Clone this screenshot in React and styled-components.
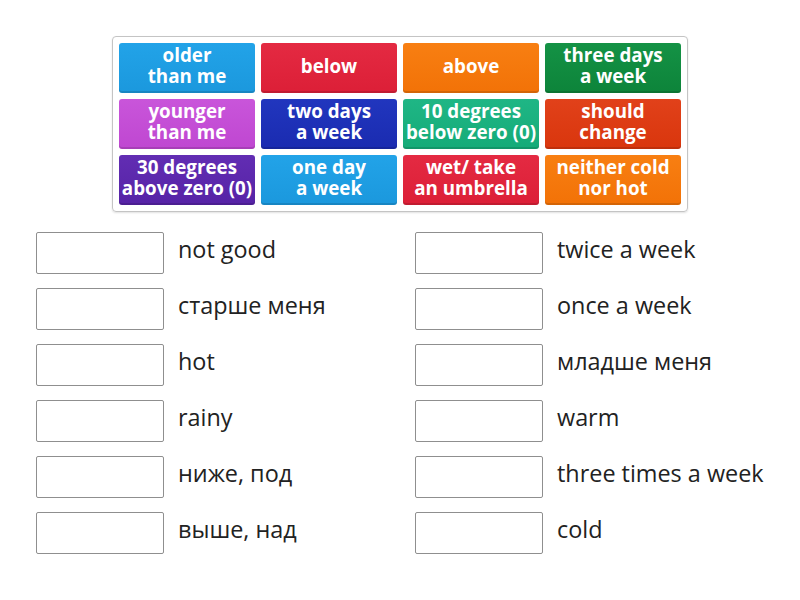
import React from 'react';
import styled, { createGlobalStyle } from 'styled-components';

const GlobalStyle = createGlobalStyle`
  body {
    margin: 0;
    background: #fff;
    font-family: "Open Sans", "Noto Sans", sans-serif;
  }
`;

const Page = styled.div`
  width: 800px;
  height: 600px;
  padding-top: 36px;
  box-sizing: border-box;
`;

const Panel = styled.div`
  width: 576px;
  box-sizing: border-box;
  margin: 0 auto;
  padding: 6px;
  border: 1px solid #c4c4c4;
  border-radius: 4px;
  box-shadow: 0 1px 2px rgba(0, 0, 0, 0.12);
  display: grid;
  grid-template-columns: repeat(4, 136px);
  grid-auto-rows: 50px;
  gap: 6px;
`;

const Tile = styled.div`
  border-radius: 3px;
  background: linear-gradient(to bottom, ${p => p.$light}, ${p => p.$color});
  box-shadow: inset 0 -2px 0 rgba(0, 0, 0, 0.12);
  color: #fff;
  font-weight: 700;
  font-size: 18.8px;
  line-height: 21px;
  text-align: center;
  display: flex;
  align-items: center;
  justify-content: center;
  padding-bottom: 4px;
  box-sizing: border-box;
  white-space: nowrap;
`;

const Answers = styled.div`
  margin: 20px 0 0 36px;
  display: grid;
  grid-template-columns: 379px 379px;
  row-gap: 14px;
`;

const Row = styled.div`
  display: flex;
  align-items: center;
  gap: 14px;
  height: 42px;
`;

const Slot = styled.div`
  width: 128px;
  height: 42px;
  box-sizing: border-box;
  border: 1px solid #8f8f8f;
  border-radius: 2px;
  background: #fff;
  flex-shrink: 0;
`;

const Label = styled.span`
  font-size: 23.4px;
  color: #222;
  margin-top: -8px;
  white-space: nowrap;
`;

const tiles = [
  { text: ['older', 'than me'], color: '#1b98dd', light: '#22a3e8' },
  { text: ['below'], color: '#dc1f37', light: '#e42a42' },
  { text: ['above'], color: '#f27207', light: '#f87f12' },
  { text: ['three days', 'a week'], color: '#0d843a', light: '#149245' },
  { text: ['younger', 'than me'], color: '#bf47d1', light: '#c955da' },
  { text: ['two days', 'a week'], color: '#1a2bb0', light: '#2136be' },
  { text: ['10 degrees', 'below zero (0)'], color: '#15ab78', light: '#1fb685' },
  { text: ['should', 'change'], color: '#d9360d', light: '#e1411a' },
  { text: ['30 degrees', 'above zero (0)'], color: '#5623a6', light: '#622db3' },
  { text: ['one day', 'a week'], color: '#1b98dd', light: '#22a3e8' },
  { text: ['wet/ take', 'an umbrella'], color: '#dc1f37', light: '#e42a42' },
  { text: ['neither cold', 'nor hot'], color: '#f27207', light: '#f87f12' },
];

const left = ['not good', 'старше меня', 'hot', 'rainy', 'ниже, под', 'выше, над'];
const right = ['twice a week', 'once a week', 'младше меня', 'warm', 'three times a week', 'cold'];

export default function App() {
  const rows = [];
  left.forEach((l, i) => {
    rows.push(
      <Row key={`l${i}`}>
        <Slot />
        <Label>{l}</Label>
      </Row>
    );
    rows.push(
      <Row key={`r${i}`}>
        <Slot />
        <Label>{right[i]}</Label>
      </Row>
    );
  });

  return (
    <>
      <GlobalStyle />
      <Page>
        <Panel>
          {tiles.map((t, i) => (
            <Tile key={i} $color={t.color} $light={t.light}>
              <span>
                {t.text[0]}
                {t.text[1] && <br />}
                {t.text[1]}
              </span>
            </Tile>
          ))}
        </Panel>
        <Answers>{rows}</Answers>
      </Page>
    </>
  );
}
